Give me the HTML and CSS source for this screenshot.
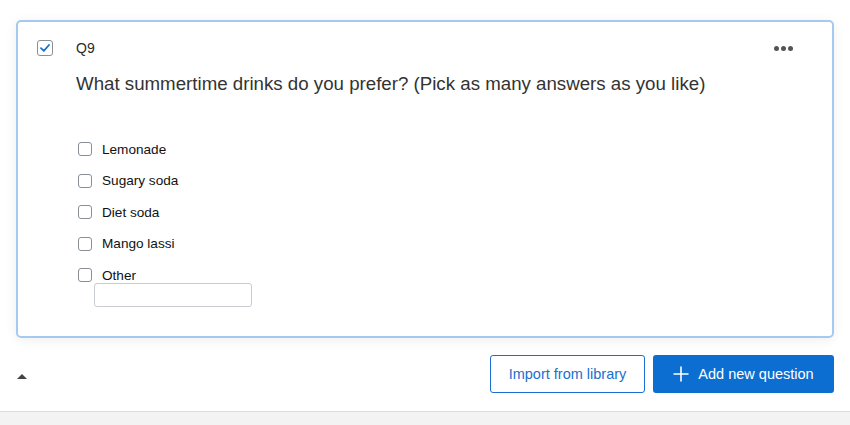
FILE: index.html
```html
<!DOCTYPE html>
<html>
<head>
<meta charset="utf-8">
<link rel="stylesheet" href="styles.css">
</head>
<body>
<div class="page">
  <div class="card">
    <div class="card-head">
      <span class="qcheck">
        <svg width="10" height="8" viewBox="0 0 10 8"><path d="M1 4.2 L3.8 6.8 L9 1" fill="none" stroke="#1a6fd0" stroke-width="1.8" stroke-linecap="round" stroke-linejoin="round"/></svg>
      </span>
      <span class="qid">Q9</span>
      <span class="more"><i></i><i></i><i></i></span>
    </div>
    <div class="qtext">What summertime drinks do you prefer? (Pick as many answers as you like)</div>
    <ul class="options">
      <li class="opt"><span class="box"></span><span class="label">Lemonade</span></li>
      <li class="opt"><span class="box"></span><span class="label">Sugary soda</span></li>
      <li class="opt"><span class="box"></span><span class="label">Diet soda</span></li>
      <li class="opt"><span class="box"></span><span class="label">Mango lassi</span></li>
      <li class="opt"><span class="box"></span><span class="label">Other</span></li>
    </ul>
    <div class="other-input"></div>
  </div>
  <div class="actions">
    <span class="collapse"></span>
    <div class="buttons">
      <button class="btn btn-outline">Import from library</button>
      <button class="btn btn-primary">
        <svg width="16" height="16" viewBox="0 0 16 16"><path d="M8 0.5 V15.5 M0.5 8 H15.5" stroke="#fff" stroke-width="1.6" fill="none"/></svg>
        Add new question
      </button>
    </div>
  </div>
</div>
<div class="band"></div>
</body>
</html>
```

FILE: styles.css
```css
* { box-sizing: border-box; }
html, body { margin: 0; padding: 0; background: #fff; }
body {
  font-family: "Liberation Sans", Arial, sans-serif;
  color: #2a2a2a;
  height: 425px;
  overflow: hidden;
}
.page {
  padding: 20px 16px 0 16px;
  height: 411px;
}
.card {
  height: 318px;
  border: 2px solid #a6c9f0;
  border-radius: 5px;
  box-shadow: 0 2px 12px rgba(0, 0, 0, 0.07);
  padding: 18px 0 0 19px;
}
.card-head {
  display: flex;
  align-items: center;
  height: 16px;
}
.qcheck {
  width: 16px;
  height: 16px;
  border: 1px solid #8a8f96;
  border-radius: 3px;
  display: flex;
  align-items: center;
  justify-content: center;
}
.qid {
  margin-left: 23px;
  font-size: 14px;
  color: #2a2a2a;
}
.more {
  margin-left: auto;
  margin-right: 39px;
  display: flex;
  gap: 2px;
}
.more i {
  width: 5px;
  height: 5px;
  border-radius: 50%;
  background: #555;
}
.qtext {
  margin: 16px 0 0 39px;
  font-size: 18.7px;
  line-height: 24px;
  color: #333;
}
.options {
  list-style: none;
  margin: 44px 0 0 41px;
  padding: 0;
  display: flex;
  flex-direction: column;
  gap: 13.5px;
}
.opt {
  display: flex;
  align-items: center;
  height: 18px;
}
.box {
  width: 14px;
  height: 14px;
  border: 1px solid #8a8f96;
  border-radius: 3px;
}
.label {
  margin-left: 10px;
  font-size: 13.6px;
  color: #111;
}
.other-input {
  margin: -1px 0 0 57px;
  width: 158px;
  height: 24px;
  border: 1px solid #c8ccd0;
  border-radius: 3px;
}
.actions {
  margin-top: 17px;
  display: flex;
  align-items: center;
  height: 38px;
}
.collapse {
  margin-left: 1px;
  margin-top: 4px;
  width: 0;
  height: 0;
  border-left: 5px solid transparent;
  border-right: 5px solid transparent;
  border-bottom: 5px solid #444;
}
.buttons {
  margin-left: auto;
  display: flex;
  gap: 8px;
}
.btn {
  height: 38px;
  border-radius: 3px;
  font-family: "Liberation Sans", Arial, sans-serif;
  font-size: 14.5px;
  display: flex;
  align-items: center;
  justify-content: center;
  cursor: pointer;
}
.btn-outline {
  width: 155px;
  background: #fff;
  border: 1px solid #1a6fd0;
  color: #1a6fd0;
}
.btn-primary {
  width: 181px;
  background: #0c6ed1;
  border: none;
  color: #fff;
  gap: 9px;
}
.band {
  height: 14px;
  background: #f3f3f3;
  border-top: 1px solid #dcdcdc;
}
```
